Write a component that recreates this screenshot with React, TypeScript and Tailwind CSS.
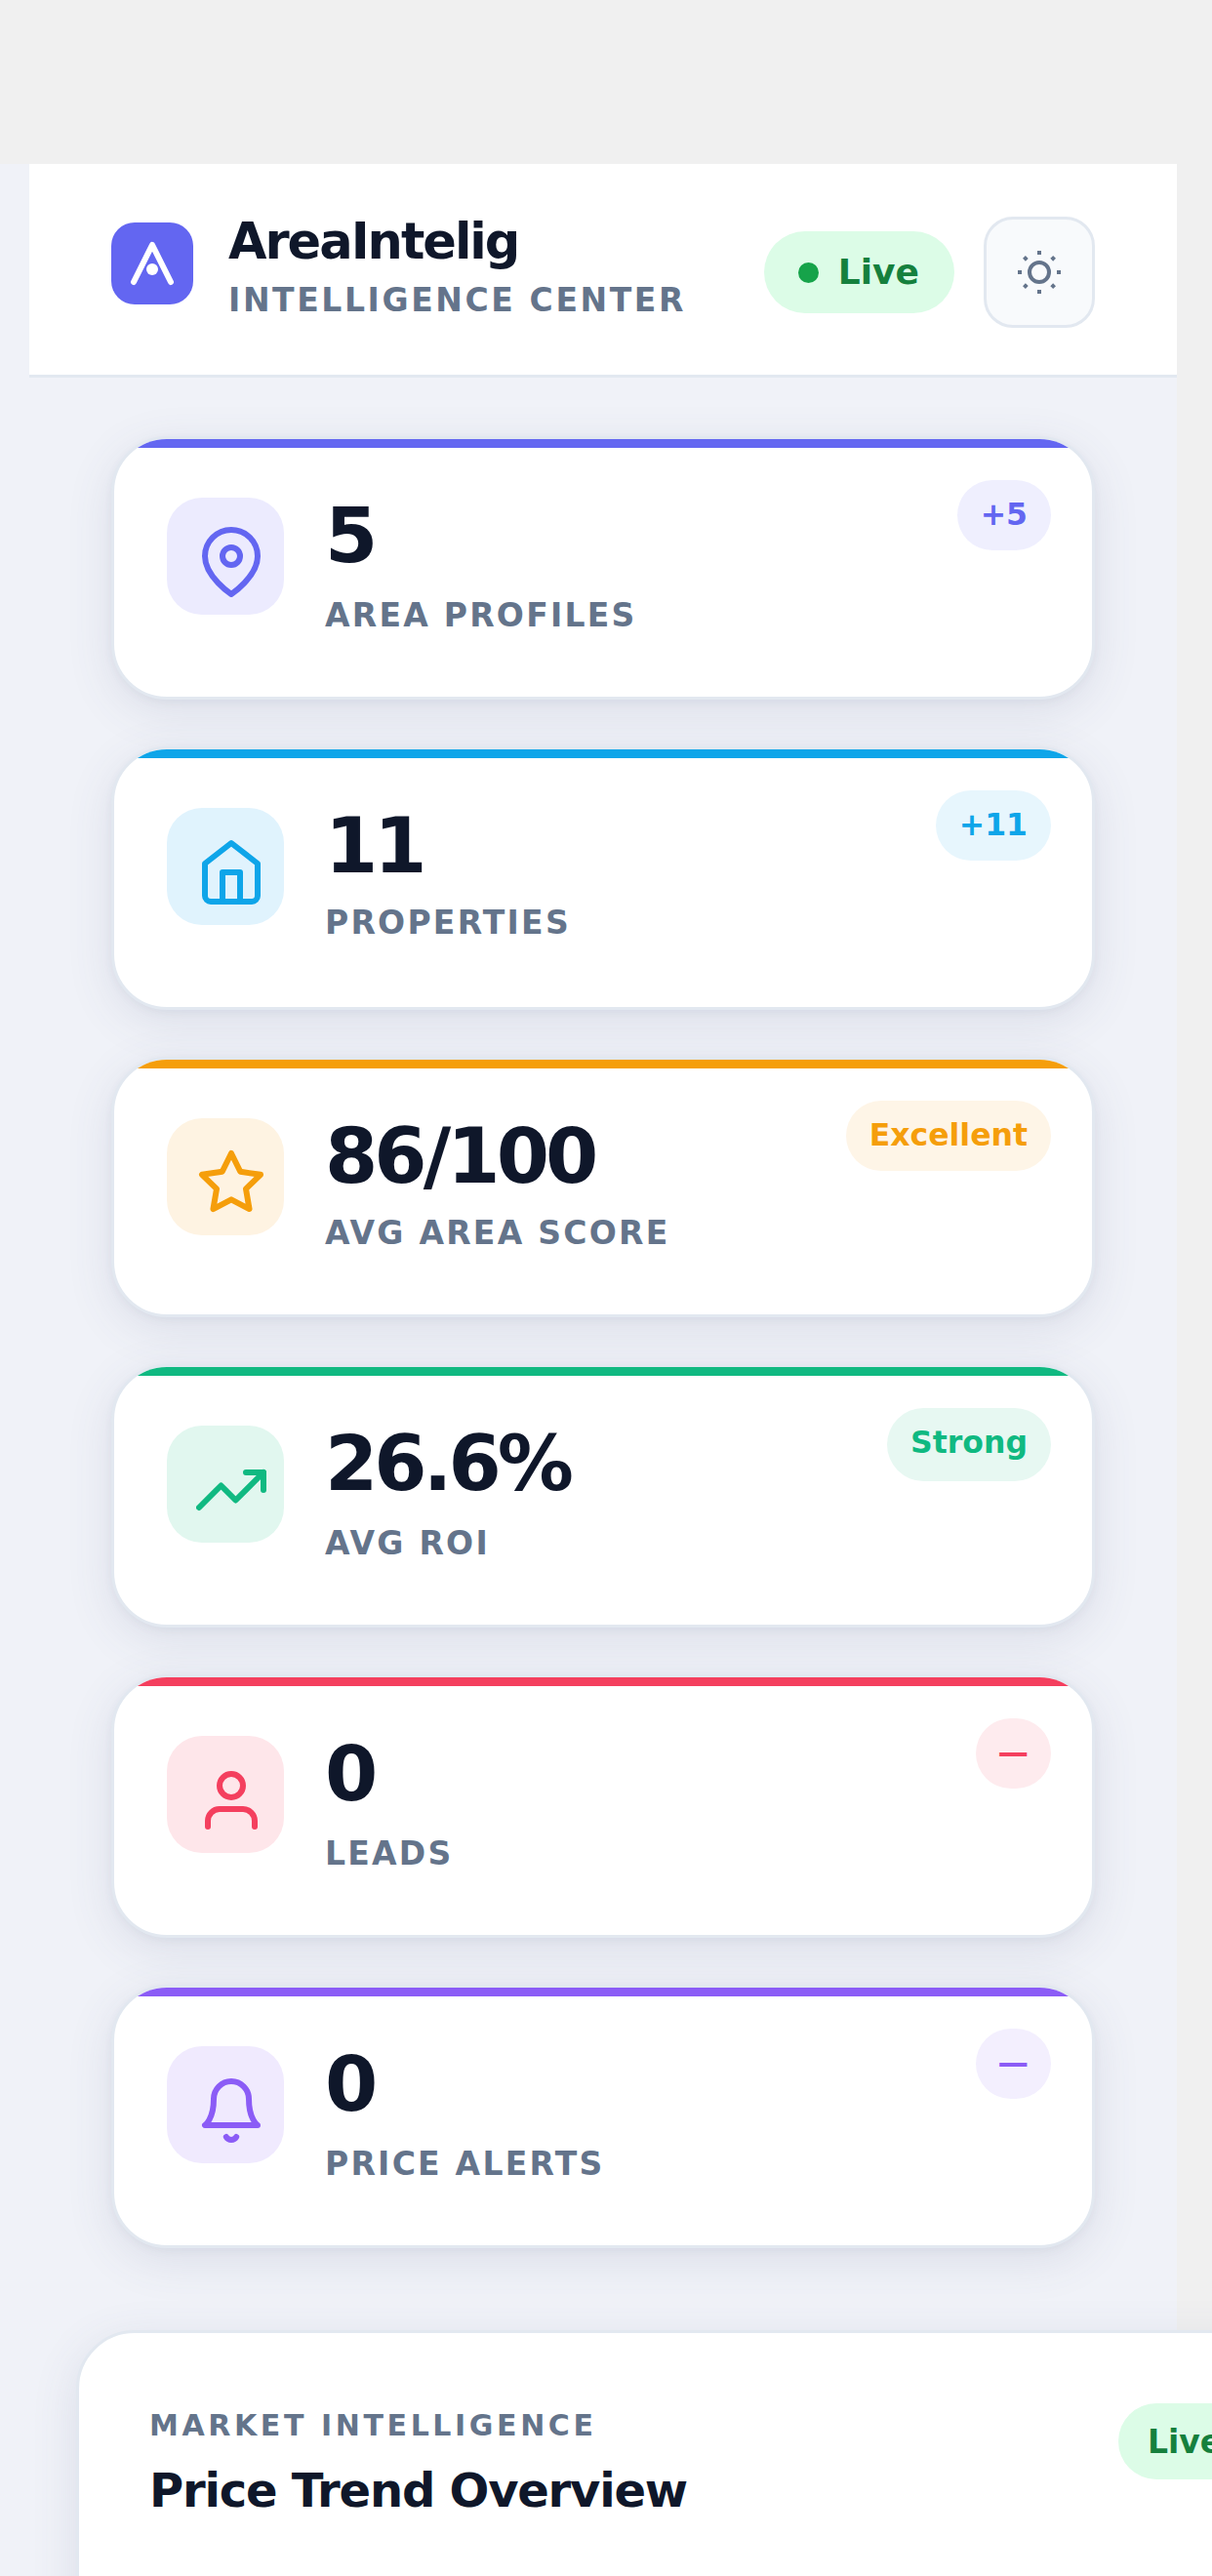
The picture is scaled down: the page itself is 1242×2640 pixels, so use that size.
import type { ReactNode } from "react";

const font = "font-['DejaVu_Sans',sans-serif]";

function Icon({ color, children }: { color: string; children: ReactNode }) {
  return (
    <svg
      width="72"
      height="72"
      viewBox="0 0 24 24"
      fill="none"
      stroke={color}
      strokeWidth="2"
      strokeLinecap="round"
      strokeLinejoin="round"
    >
      {children}
    </svg>
  );
}

const stats = [
  {
    value: "5",
    label: "AREA PROFILES",
    badge: "+5",
    bar: "bg-[#6366f1]",
    box: "bg-[#ecebfe]",
    pill: "h-[72px] px-[24px] bg-[#efeffe] text-[#6366f1]",
    color: "#6366f1",
    icon: (
      <>
        <path d="M21 10c0 7-9 13-9 13s-9-6-9-13a9 9 0 0 1 18 0z" />
        <circle cx="12" cy="10" r="3" />
      </>
    ),
  },
  {
    value: "11",
    label: "PROPERTIES",
    badge: "+11",
    bar: "bg-[#0ea5e9]",
    box: "bg-[#e0f3fd]",
    pill: "h-[72px] px-[24px] bg-[#e7f6fd] text-[#0ea5e9]",
    color: "#0ea5e9",
    tight: true,
    icon: (
      <>
        <path d="M3 9l9-7 9 7v11a2 2 0 0 1-2 2H5a2 2 0 0 1-2-2z" />
        <polyline points="9 22 9 12 15 12 15 22" />
      </>
    ),
  },
  {
    value: "86/100",
    label: "AVG AREA SCORE",
    badge: "Excellent",
    bar: "bg-[#f59e0b]",
    box: "bg-[#fef3e2]",
    pill: "h-[72px] px-[24px] bg-[#fef5e7] text-[#f59e0b]",
    color: "#f59e0b",
    tight: true,
    short: true,
    icon: <polygon points="12 2 15.09 8.26 22 9.27 17 14.14 18.18 21.02 12 17.77 5.82 21.02 7 14.14 2 9.27 8.91 8.26 12 2" />,
  },
  {
    value: "26.6%",
    label: "AVG ROI",
    badge: "Strong",
    bar: "bg-[#10b981]",
    box: "bg-[#e1f7ef]",
    pill: "h-[75px] px-[24px] pb-[3px] bg-[#e7f8f2] text-[#10b981]",
    color: "#10b981",
    icon: (
      <>
        <polyline points="23 6 13.5 15.5 8.5 10.5 1 18" />
        <polyline points="17 6 23 6 23 12" />
      </>
    ),
  },
  {
    value: "0",
    label: "LEADS",
    badge: "—",
    bar: "bg-[#f43f5e]",
    box: "bg-[#fee6ea]",
    pill: "h-[72px] px-[23px] bg-[#feebee] text-[#f43f5e]",
    color: "#f43f5e",
    icon: (
      <>
        <path d="M20 21v-2a4 4 0 0 0-4-4H8a4 4 0 0 0-4 4v2" />
        <circle cx="12" cy="7" r="4" />
      </>
    ),
  },
  {
    value: "0",
    label: "PRICE ALERTS",
    badge: "—",
    bar: "bg-[#8b5cf6]",
    box: "bg-[#f0eafe]",
    pill: "h-[72px] px-[23px] bg-[#f3effe] text-[#8b5cf6]",
    color: "#8b5cf6",
    icon: (
      <>
        <path d="M18 8A6 6 0 0 0 6 8c0 7-3 9-3 9h18s-3-2-3-9" />
        <path d="M13.73 21a2 2 0 0 1-3.46 0" />
      </>
    ),
  },
];

function LivePill() {
  return (
    <div className="flex h-[84px] items-center gap-[20px] rounded-full bg-[#dcfce7] pl-[35px] pr-[36px]">
      <span className="size-[21px] rounded-full bg-[#16a34a]" />
      <span className="text-[36px] font-bold leading-none text-[#15803d]">Live</span>
    </div>
  );
}

function Header() {
  return (
    <header className="ml-[30px] flex h-[219px] items-start justify-between border-b-[3px] border-[#e2e8f0] bg-white pl-[84px] pr-[84px] pt-[54px]">
      <div className="flex items-start gap-[36px]">
        <div className="mt-[6px] flex size-[84px] items-center justify-center rounded-[24px] bg-[#6366f1]">
          <svg width="84" height="84" viewBox="0 0 84 84" fill="none">
            <path d="M23 61L42 23L61 61" stroke="white" strokeWidth="6" strokeLinecap="round" strokeLinejoin="round" />
            <circle cx="42" cy="48" r="6" fill="white" />
          </svg>
        </div>
        <div>
          <div className="text-[51px] font-bold leading-[51px] tracking-[-2px] text-[#0f172a]">AreaIntelig</div>
          <div className="mt-[17px] text-[33px] font-bold leading-[36px] tracking-[2.6px] text-[#64748b]">INTELLIGENCE CENTER</div>
        </div>
      </div>
      <div className="flex items-center gap-[30px]">
        <LivePill />
        <button className="flex size-[114px] items-center justify-center rounded-[30px] border-[3px] border-[#e2e8f0] bg-[#f8fafc]">
          <svg width="48" height="48" viewBox="0 0 24 24" fill="none" stroke="#64748b" strokeWidth="2" strokeLinecap="square">
            <circle cx="12" cy="12" r="5" />
            <path d="M12 2v.01M12 22v.01M2 12h.01M22 12h.01M4.93 4.93l.01.01M19.07 19.07l.01.01M4.93 19.07l.01-.01M19.07 4.93l.01-.01" />
          </svg>
        </button>
      </div>
    </header>
  );
}

function StatCard({ stat }: { stat: (typeof stats)[number] }) {
  return (
    <div
      className={`relative overflow-hidden rounded-[57px] border-[3px] border-[#e2e8f0] bg-white pl-[54px] pt-[60px] shadow-[0_12px_48px_rgba(71,85,125,0.12),0_3px_9px_rgba(71,85,125,0.06)] ${
        stat.short ? "h-[267px]" : "h-[270px]"
      }`}
    >
      <div className={`absolute inset-x-0 top-0 h-[9px] ${stat.bar}`} />
      <div className="flex items-start gap-[42px]">
        <div className={`flex size-[120px] shrink-0 items-center justify-center rounded-[36px] pl-[12px] pt-[12px] ${stat.box}`}>
          <Icon color={stat.color}>{stat.icon}</Icon>
        </div>
        <div>
          <div className="text-[78px] font-bold leading-[78px] tracking-[-3.9px] text-[#0f172a]">{stat.value}</div>
          <div
            className={`text-[33px] font-bold leading-[39px] tracking-[2.25px] text-[#64748b] ${
              stat.tight ? "mt-[20px]" : "mt-[23px]"
            }`}
          >
            {stat.label}
          </div>
        </div>
      </div>
      <div className={`absolute right-[42px] top-[42px] flex items-center rounded-full text-[31.5px] font-bold leading-none ${stat.pill}`}>
        {stat.badge}
      </div>
    </div>
  );
}

function TrendCard() {
  return (
    <section className="ml-[78px] flex h-[400px] w-[1300px] items-start rounded-t-[60px] border-[3px] border-[#e2e8f0] bg-white pl-[72px] pt-[72px] shadow-[0_12px_48px_rgba(71,85,125,0.12)]">
      <div className="w-[993px] shrink-0 pt-[5px]">
        <div className="text-[30px] font-bold leading-[36px] tracking-[3.6px] text-[#64748b]">MARKET INTELLIGENCE</div>
        <div className="mt-[20px] text-[48px] font-bold leading-[56px] tracking-[-1.2px] text-[#0f172a]">Price Trend Overview</div>
      </div>
      <div className="flex h-[78px] items-center rounded-full bg-[#dcfce7] px-[30px] text-[33px] font-bold leading-none text-[#15803d]">
        Live
      </div>
    </section>
  );
}

export default function App() {
  return (
    <div className={`h-[2640px] w-[1242px] overflow-hidden bg-[#f0f0f0] pt-[168px] ${font}`}>
      <div className="h-[2472px] w-[1206px] bg-[#f0f2f8]">
        <Header />
        <main className="flex flex-col gap-[48px] pb-[84px] pl-[114px] pr-[84px] pt-[60px]">
          {stats.map((stat) => (
            <StatCard key={stat.label} stat={stat} />
          ))}
        </main>
        <TrendCard />
      </div>
    </div>
  );
}
